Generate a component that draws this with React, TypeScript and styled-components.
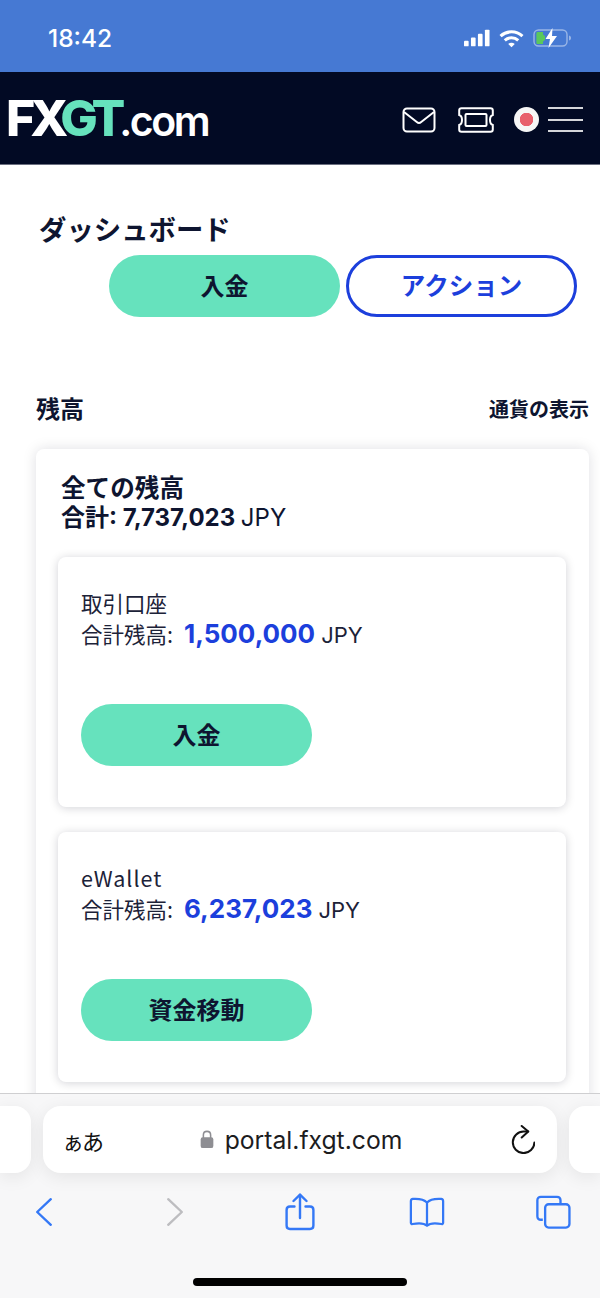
import styled, { createGlobalStyle } from 'styled-components';

const GlobalStyle = createGlobalStyle`
    html, body {
        margin: 0;
        padding: 0;
        background: #ffffff;
    }
    * {
        box-sizing: border-box;
    }
    body {
        font-family: Inter, "Noto Sans CJK JP", sans-serif;
        color: #0e1530;
    }
`;

const JP = '"Noto Sans CJK JP", sans-serif';
const NUM = 'Inter, "Noto Sans CJK JP", sans-serif';

const SignalIcon = () => (
    <svg width="26" height="18" viewBox="0 0 28 18" fill="#fff">
        <rect x="0" y="12" width="5" height="6" rx="1" />
        <rect x="7.5" y="8.5" width="5" height="9.5" rx="1" />
        <rect x="15" y="4.5" width="5" height="13.5" rx="1" />
        <rect x="22.5" y="0" width="5" height="18" rx="1" />
    </svg>
);

const WifiIcon = () => (
    <svg width="25" height="19" viewBox="0 0 26 19" fill="none" stroke="#fff" strokeWidth="3.2">
        <path d="M1.6 7 C8 1 18 1 24.4 7" />
        <path d="M6 11.4 C10 7.8 16 7.8 20 11.4" />
        <path d="M13 18.6 L9.6 15.2 C11.6 13.6 14.4 13.6 16.4 15.2 Z" fill="#fff" stroke="none" />
    </svg>
);

const BatteryIcon = () => (
    <svg width="39" height="20" viewBox="0 0 39 20" fill="none">
        <rect x="1" y="2" width="33" height="16" rx="4.5" stroke="rgba(255,255,255,.45)" strokeWidth="1.4" />
        <path d="M36 7.5 C37.6 8 38 9 38 10 C38 11 37.6 12 36 12.5 Z" fill="rgba(255,255,255,.45)" />
        <path d="M5 4 H10 V6.6 L12 8 V12 L10 13.4 V16 H5 C3.8 16 3.4 15.4 3.4 14.4 V5.6 C3.4 4.6 3.8 4 5 4 Z" fill="#5ac85c" />
        <path d="M19.5 0 L12.5 11 H17 L15.5 20 L24 8 H19 Z" fill="#fff" />
    </svg>
);

const MailIcon = () => (
    <svg width="34" height="26" viewBox="0 0 34 26" fill="none" stroke="#fff" strokeWidth="2">
        <rect x="1.5" y="1.5" width="31" height="23" rx="3.5" />
        <path d="M2 5 L14.8 15 C16 16 18 16 19.2 15 L32 5" />
    </svg>
);

const TicketIcon = () => (
    <svg width="38" height="26" viewBox="0 0 38 26" fill="none" stroke="#fff" strokeWidth="2">
        <path d="M4.5 1.2 H33.5 C35 1.2 35.8 2 35.8 3.5 V8 C33.8 8.6 33 10.6 33 13 C33 15.4 33.8 17.4 35.8 18 V22.5 C35.8 24 35 24.8 33.5 24.8 H4.5 C3 24.8 2.2 24 2.2 22.5 V18 C4.2 17.4 5 15.4 5 13 C5 10.6 4.2 8.6 2.2 8 V3.5 C2.2 2 3 1.2 4.5 1.2 Z" />
        <rect x="8.5" y="7" width="21" height="12" rx="1" />
    </svg>
);

const LockIcon = () => (
    <svg width="14" height="19" viewBox="0 0 15 21" fill="none">
        <path d="M3.5 9 V5.5 C3.5 3 5 1.5 7.5 1.5 C10 1.5 11.5 3 11.5 5.5 V9" stroke="#8e8e93" strokeWidth="1.7" />
        <rect x="0.5" y="8" width="14" height="12" rx="2.4" fill="#8e8e93" />
    </svg>
);

const ReloadIcon = () => (
    <svg width="25" height="29" viewBox="0 0 25 29" fill="none" stroke="#111" strokeWidth="2" strokeLinecap="round" strokeLinejoin="round">
        <path d="M18 6.5 H14 A10.8 10.8 0 1 0 24.4 17.5" />
        <path d="M11.7 1 L18.3 6.5 L11.7 12.5" />
    </svg>
);

const BackIcon = () => (
    <svg width="18" height="30" viewBox="0 0 18 30" fill="none" stroke="#3478f6" strokeWidth="2.4" strokeLinecap="round" strokeLinejoin="round">
        <path d="M15.8 2.2 L2.2 15 L15.8 27.8" />
    </svg>
);

const ForwardIcon = () => (
    <svg width="18" height="30" viewBox="0 0 18 30" fill="none" stroke="#bdbdc0" strokeWidth="2.4" strokeLinecap="round" strokeLinejoin="round">
        <path d="M2.2 2.2 L15.8 15 L2.2 27.8" />
    </svg>
);

const ShareIcon = () => (
    <svg width="30" height="38" viewBox="0 0 30 38" fill="none" stroke="#3478f6" strokeWidth="2.4" strokeLinecap="round" strokeLinejoin="round">
        <path d="M9.5 13.5 H5 C3 13.5 1.6 14.9 1.6 16.9 V32.6 C1.6 34.6 3 36 5 36 H25 C27 36 28.4 34.6 28.4 32.6 V16.9 C28.4 14.9 27 13.5 25 13.5 H20.5" />
        <path d="M15 25 V2" />
        <path d="M8.5 8 L15 1.6 L21.5 8" />
    </svg>
);

const BookIcon = () => (
    <svg width="36" height="30" viewBox="0 0 38 32" fill="none" stroke="#3478f6" strokeWidth="2.4" strokeLinecap="round" strokeLinejoin="round">
        <path d="M19 6 C16 2.6 11 1.6 4 2 C2.6 2.1 1.8 3 1.8 4.4 V27.4 C1.8 28.4 2.6 29 3.6 28.8 C10 27.6 15.6 27.4 19 30.6 C22.4 27.4 28 27.6 34.4 28.8 C35.4 29 36.2 28.4 36.2 27.4 V4.4 C36.2 3 35.4 2.1 34 2 C27 1.6 22 2.6 19 6 Z" />
        <path d="M19 6 V30" />
    </svg>
);

const TabsIcon = () => (
    <svg width="35" height="34" viewBox="0 0 36 34" fill="none" stroke="#3478f6" strokeWidth="2.4" strokeLinejoin="round">
        <path d="M7 25 H5 C2.8 25 1.4 23.6 1.4 21.4 V5 C1.4 2.8 2.8 1.4 5 1.4 H21.6 C23.8 1.4 25.2 2.8 25.2 5 V8" />
        <rect x="9.4" y="9" width="25" height="24" rx="3.6" />
    </svg>
);

const accounts = [
    { name: '取引口座', amount: '1,500,000', action: '入金', latin: false },
    { name: 'eWallet', amount: '6,237,023', action: '資金移動', latin: true },
];

export default function App() {
    return (
        <>
            <GlobalStyle />
            <Styled.Page>
                <Styled.StatusBar>
                    <Styled.Clock>18:42</Styled.Clock>
                    <Styled.StatusIcons>
                        <SignalIcon />
                        <WifiIcon />
                        <BatteryIcon />
                    </Styled.StatusIcons>
                </Styled.StatusBar>

                <Styled.Header>
                    <Styled.Logo>
                        FX<Styled.LogoAccent>GT</Styled.LogoAccent><Styled.LogoDomain>.com</Styled.LogoDomain>
                    </Styled.Logo>
                    <Styled.HeaderIcons>
                        <MailIcon />
                        <TicketIcon />
                        <Styled.Flag />
                        <Styled.Burger>
                            <span />
                            <span />
                            <span />
                        </Styled.Burger>
                    </Styled.HeaderIcons>
                </Styled.Header>

                <Styled.Main>
                    <Styled.Title>ダッシュボード</Styled.Title>
                    <Styled.TopActions>
                        <Styled.PillButton>入金</Styled.PillButton>
                        <Styled.OutlineButton>アクション</Styled.OutlineButton>
                    </Styled.TopActions>

                    <Styled.SectionHead>
                        <Styled.SectionTitle>残高</Styled.SectionTitle>
                        <Styled.SectionLink>通貨の表示</Styled.SectionLink>
                    </Styled.SectionHead>

                    <Styled.Panel>
                        <Styled.PanelTitle>全ての残高</Styled.PanelTitle>
                        <Styled.PanelTotal>
                            合計: 7,737,023 <Styled.Unit>JPY</Styled.Unit>
                        </Styled.PanelTotal>

                        <Styled.Accounts>
                            {accounts.map((account) => (
                                <Styled.AccountCard key={account.name}>
                                    <Styled.AccountName $latin={account.latin}>{account.name}</Styled.AccountName>
                                    <Styled.AccountRow>
                                        合計残高:
                                        <Styled.Amount>{account.amount}</Styled.Amount>
                                        <Styled.AmountUnit>JPY</Styled.AmountUnit>
                                    </Styled.AccountRow>
                                    <Styled.PillButton>{account.action}</Styled.PillButton>
                                </Styled.AccountCard>
                            ))}
                        </Styled.Accounts>
                    </Styled.Panel>
                </Styled.Main>

                <Styled.Browser>
                    <Styled.AddressRow>
                        <Styled.SideTab $side="left" />
                        <Styled.AddressBar>
                            <Styled.Kana>ぁあ</Styled.Kana>
                            <Styled.Url>
                                <LockIcon />
                                portal.fxgt.com
                            </Styled.Url>
                            <ReloadIcon />
                        </Styled.AddressBar>
                        <Styled.SideTab $side="right" />
                    </Styled.AddressRow>
                    <Styled.BrowserNav>
                        <Styled.NavSlot><BackIcon /></Styled.NavSlot>
                        <Styled.NavSlot><ForwardIcon /></Styled.NavSlot>
                        <Styled.NavSlot><ShareIcon /></Styled.NavSlot>
                        <Styled.NavSlot><BookIcon /></Styled.NavSlot>
                        <Styled.NavSlot><TabsIcon /></Styled.NavSlot>
                    </Styled.BrowserNav>
                    <Styled.HomeBar />
                </Styled.Browser>
            </Styled.Page>
        </>
    );
}

const Styled = {
    Page: styled.div`
        width: 600px;
        height: 1298px;
        display: flex;
        flex-direction: column;
        overflow: hidden;
    `,
    StatusBar: styled.div`
        height: 72px;
        flex: none;
        background: #4679d3;
        display: flex;
        align-items: center;
        justify-content: space-between;
        padding: 4px 28px 0 48px;
    `,
    Clock: styled.div`
        font-family: Inter, sans-serif;
        font-size: 24.5px;
        font-weight: 500;
        color: #fff;
    `,
    StatusIcons: styled.div`
        display: flex;
        align-items: center;
        gap: 9px;
    `,
    Header: styled.header`
        height: 93px;
        flex: none;
        background: #020a24;
        border-bottom: 1px solid #6b6f80;
        display: flex;
        align-items: center;
        justify-content: space-between;
        padding: 0 17px 0 6px;
    `,
    Logo: styled.div`
        font-family: Inter, sans-serif;
        font-size: 50px;
        font-weight: 800;
        letter-spacing: -5px;
        color: #fff;
        line-height: 1;
    `,
    LogoAccent: styled.span`
        color: #66e2bd;
    `,
    LogoDomain: styled.span`
        margin-left: -1px;
        font-size: 41px;
        font-weight: 600;
        letter-spacing: -2.5px;
    `,
    HeaderIcons: styled.div`
        display: flex;
        align-items: center;
        padding-top: 3px;

        svg + svg {
            margin-left: 21px;
        }
    `,
    Flag: styled.div`
        width: 25px;
        height: 25px;
        margin-left: 19px;
        border-radius: 50%;
        background: radial-gradient(circle, #e8606c 0 6.5px, #f6f6f6 7px);
    `,
    Burger: styled.div`
        width: 35px;
        height: 25px;
        margin-left: 9px;
        display: flex;
        flex-direction: column;
        justify-content: space-between;

        span {
            display: block;
            height: 2px;
            background: #d5d6da;
        }
    `,
    Main: styled.main`
        flex: 1;
        min-height: 0;
        overflow: hidden;
        background: #ffffff;
        padding: 46px 11px 0 36px;
    `,
    Title: styled.h1`
        margin: 0 0 0 3px;
        font-family: ${JP};
        font-size: 27.4px;
        line-height: 34px;
        font-weight: 700;
    `,
    TopActions: styled.div`
        margin: 10px 0 0 73px;
        display: flex;
        gap: 6px;
    `,
    PillButton: styled.div`
        width: 231px;
        height: 62px;
        padding-bottom: 3px;
        border-radius: 31px;
        background: #66e2bd;
        display: flex;
        align-items: center;
        justify-content: center;
        font-family: ${JP};
        font-size: 24px;
        font-weight: 700;
        color: #0e1530;
    `,
    OutlineButton: styled.div`
        width: 231px;
        height: 62px;
        padding-bottom: 3px;
        border-radius: 31px;
        border: 3px solid #1c3fdc;
        background: #fff;
        display: flex;
        align-items: center;
        justify-content: center;
        font-family: ${JP};
        font-size: 24.5px;
        font-weight: 700;
        color: #1c3fdc;
    `,
    SectionHead: styled.div`
        margin-top: 73px;
        display: flex;
        align-items: center;
        justify-content: space-between;
    `,
    SectionTitle: styled.h2`
        margin: 0;
        font-family: ${JP};
        font-size: 24px;
        line-height: 36px;
        font-weight: 700;
    `,
    SectionLink: styled.div`
        font-family: ${JP};
        font-size: 20px;
        font-weight: 700;
    `,
    Panel: styled.section`
        margin-top: 23px;
        background: #fff;
        border-radius: 8px;
        box-shadow: 0 0 14px rgba(2, 10, 36, 0.13);
        padding: 20px 23px 40px 22px;
    `,
    PanelTitle: styled.div`
        margin-left: 3px;
        font-family: ${JP};
        font-size: 24.6px;
        line-height: 34px;
        font-weight: 700;
    `,
    PanelTotal: styled.div`
        margin-left: 3px;
        font-family: ${NUM};
        font-size: 24px;
        line-height: 30px;
        font-weight: 700;
    `,
    Unit: styled.span`
        font-weight: 400;
    `,
    Accounts: styled.div`
        margin-top: 24px;
        display: flex;
        flex-direction: column;
        gap: 25px;
    `,
    AccountCard: styled.div`
        height: 250px;
        background: #fff;
        border-radius: 8px;
        box-shadow: 0 1px 10px rgba(2, 10, 36, 0.18);
        padding: 29px 23px 0;
    `,
    AccountName: styled.div<{ $latin: boolean }>`
        font-family: ${JP};
        font-size: 21.5px;
        line-height: 33px;
        letter-spacing: ${(p) => (p.$latin ? '1px' : '0')};
        color: #1c2238;
    `,
    AccountRow: styled.div`
        display: flex;
        align-items: baseline;
        font-family: ${JP};
        font-size: 21.5px;
        line-height: 30px;
        color: #1c2238;
        margin-bottom: 54px;
    `,
    Amount: styled.span`
        font-family: ${NUM};
        margin-left: 11px;
        font-size: 26px;
        font-weight: 700;
        color: #1c3fdc;
    `,
    AmountUnit: styled.span`
        font-family: ${NUM};
        margin-left: 6px;
        font-size: 22px;
    `,
    Browser: styled.div`
        height: 205px;
        flex: none;
        background: #f7f7f8;
        border-top: 1px solid #cfcfd1;
        display: flex;
        flex-direction: column;
    `,
    AddressRow: styled.div`
        margin-top: 12px;
        display: flex;
        gap: 12px;
        height: 67px;
        flex: none;
    `,
    SideTab: styled.div<{ $side: 'left' | 'right' }>`
        flex: none;
        width: 31px;
        background: #fff;
        box-shadow: 0 4px 18px rgba(0, 0, 0, 0.08);
        border-radius: ${(p) => (p.$side === 'left' ? '0 16px 16px 0' : '16px 0 0 16px')};
    `,
    AddressBar: styled.div`
        flex: 1;
        background: #fff;
        border-radius: 18px;
        box-shadow: 0 4px 18px rgba(0, 0, 0, 0.08);
        display: flex;
        align-items: center;
        justify-content: space-between;
        padding: 0 22px 0 19px;
    `,
    Kana: styled.div`
        font-family: ${JP};
        font-size: 22px;
        letter-spacing: -2px;
        color: #111;
    `,
    Url: styled.div`
        display: flex;
        align-items: center;
        gap: 11px;
        margin-right: 10px;
        font-family: Inter, sans-serif;
        font-size: 24.7px;
        color: #1c1c1e;
    `,
    BrowserNav: styled.div`
        margin-top: 20px;
        height: 38px;
        flex: none;
        display: grid;
        grid-template-columns: 131px 125px 127px 126px 38px;
        padding-left: 25px;
    `,
    NavSlot: styled.div`
        width: 38px;
        display: flex;
        align-items: center;
        justify-content: center;
    `,
    HomeBar: styled.div`
        width: 214px;
        height: 8px;
        margin: 47px auto 0;
        border-radius: 4px;
        background: #000;
    `,
};
